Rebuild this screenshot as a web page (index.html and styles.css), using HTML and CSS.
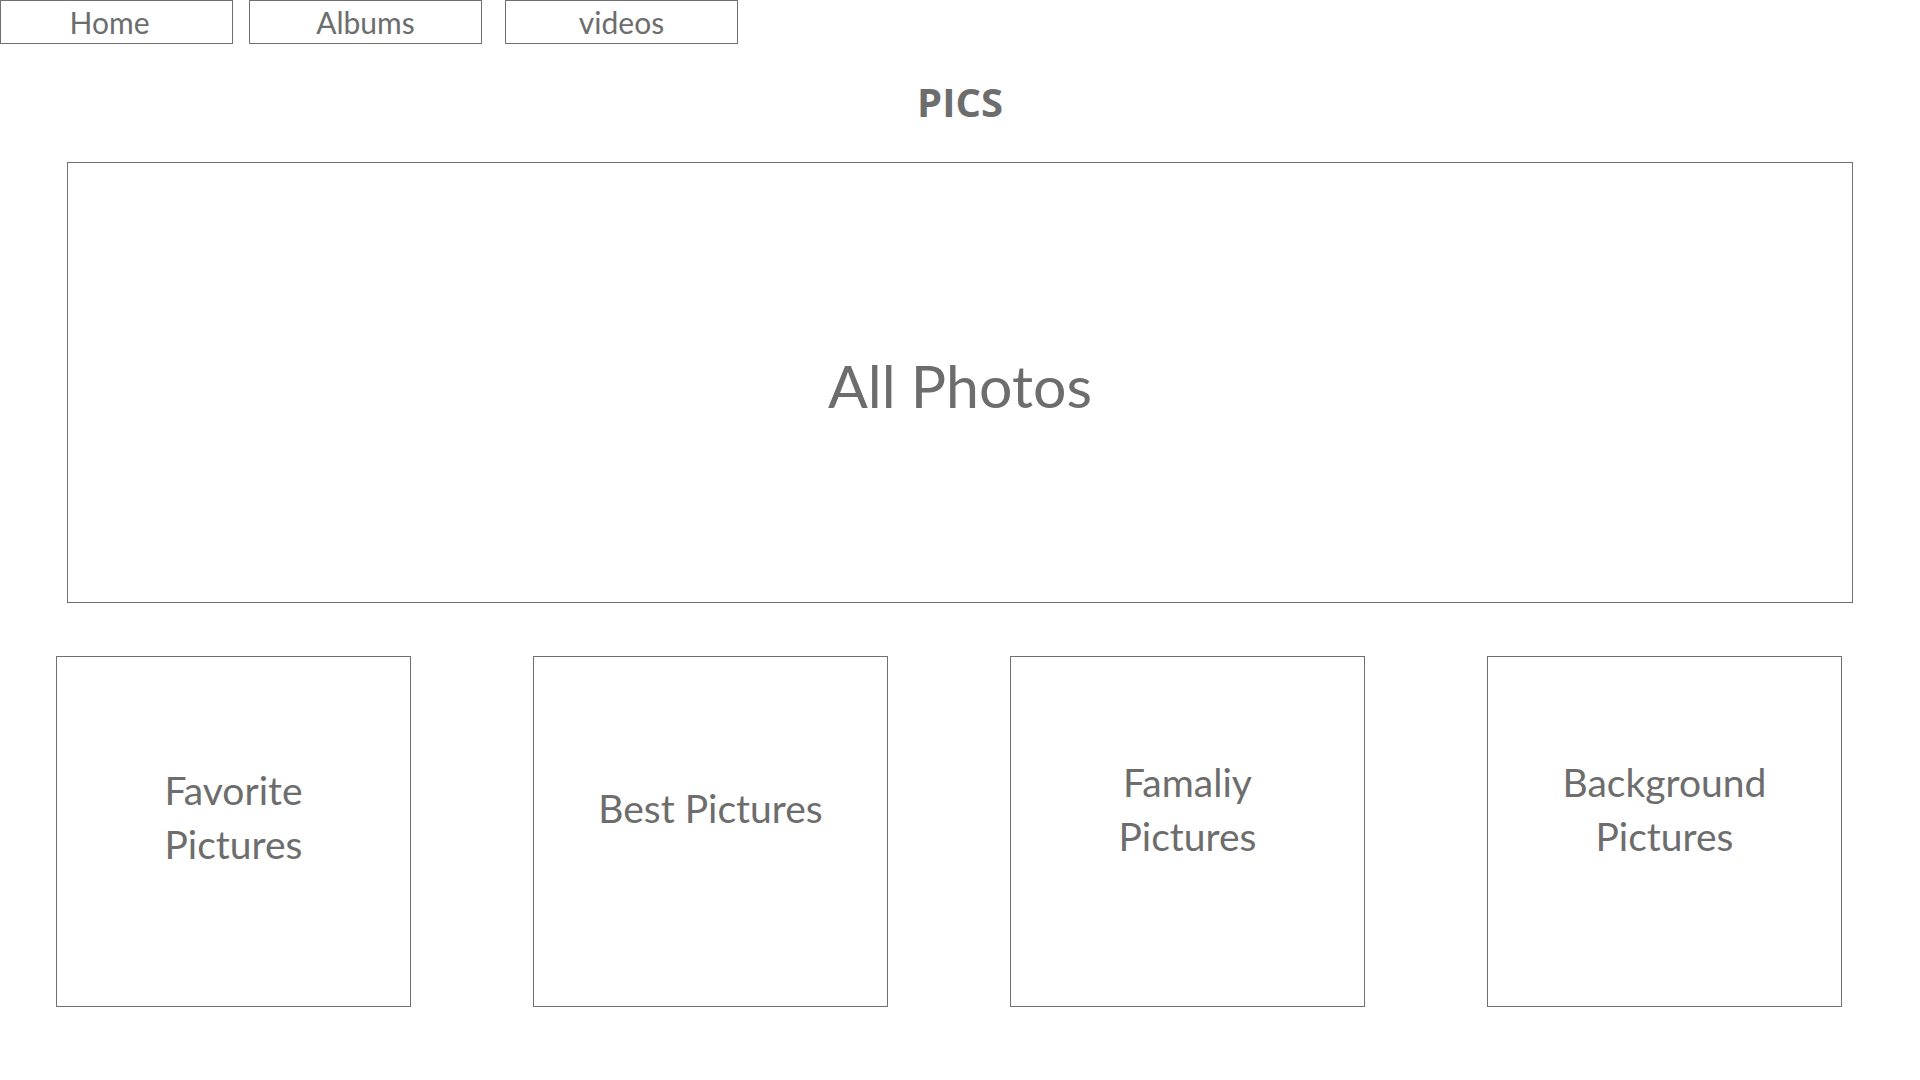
FILE: index.html
```html
<!DOCTYPE html>
<html lang="en">
<head>
<meta charset="utf-8">
<title>PICS</title>
<link rel="stylesheet" href="styles.css">
</head>
<body>
<nav class="nav">
  <a class="nav-btn nav-home">Home</a>
  <a class="nav-btn nav-albums">Albums</a>
  <a class="nav-btn nav-videos">videos</a>
</nav>
<h1 class="title">PICS</h1>
<section class="hero">
  <span class="hero-label">All Photos</span>
</section>
<section class="cards">
  <div class="card card-fav"><span>Favorite<br>Pictures</span></div>
  <div class="card card-best"><span>Best Pictures</span></div>
  <div class="card card-family"><span>Famaliy<br>Pictures</span></div>
  <div class="card card-bg"><span>Background<br>Pictures</span></div>
</section>
</body>
</html>
```
FILE: styles.css
```css
* { box-sizing: border-box; }
html, body {
  margin: 0;
  padding: 0;
  background: #ffffff;
}
body {
  width: 1920px;
  height: 1080px;
  overflow: hidden;
  font-family: "Lato", "Open Sans", sans-serif;
  color: #6d6d6d;
}
.nav {
  display: flex;
  height: 44px;
}
.nav-btn {
  display: flex;
  align-items: center;
  justify-content: center;
  height: 44px;
  border: 1px solid #707070;
  font-size: 30px;
  line-height: 1;
  color: #6d6d6d;
  text-decoration: none;
}
.nav-home { width: 233px; padding-right: 14px; }
.nav-albums { width: 233px; margin-left: 16px; }
.nav-videos { width: 233px; margin-left: 23px; }
.title {
  margin: 38px 0 0 0;
  height: 40px;
  line-height: 40px;
  font-family: "Open Sans", sans-serif;
  font-size: 40px;
  font-weight: 700;
  text-align: center;
  color: #6d6d6d;
}
.hero {
  margin: 40px 0 0 67px;
  width: 1786px;
  height: 441px;
  border: 1px solid #707070;
  display: flex;
  align-items: center;
  justify-content: center;
}
.hero-label {
  font-size: 59px;
  line-height: 1.35;
  margin-top: 6px;
}
.cards {
  display: flex;
  gap: 122px;
  margin: 53px 0 0 56px;
}
.card {
  width: 355px;
  height: 351px;
  border: 1px solid #707070;
  display: flex;
  justify-content: center;
  align-items: flex-start;
  text-align: center;
  font-size: 39px;
  line-height: 54px;
}
.card-fav { padding-top: 106px; }
.card-best { padding-top: 124px; }
.card-family { padding-top: 98px; }
.card-bg { padding-top: 98px; }
```
